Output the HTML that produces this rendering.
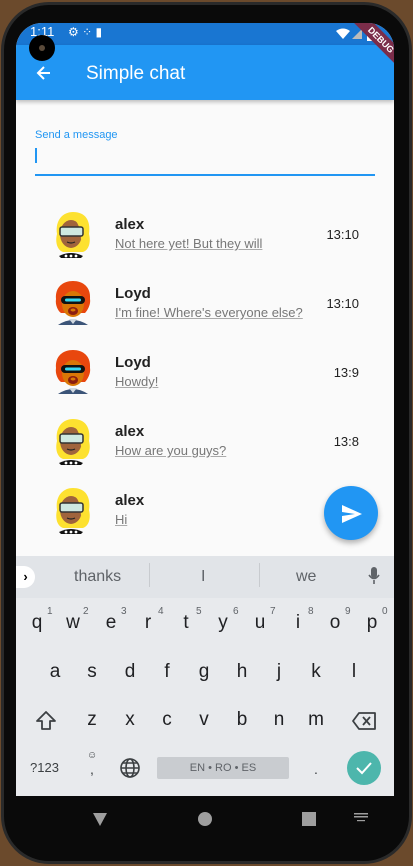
<!DOCTYPE html>
<html><head><meta charset="utf-8"><style>
*{margin:0;padding:0;box-sizing:border-box}
body{width:413px;height:866px;background:#6b4a2c;position:relative;overflow:hidden;font-family:"Liberation Sans",Roboto,sans-serif}
.abs{position:absolute}
#phone{left:1px;top:2px;width:411px;height:862px;background:#0a0a0a;border-radius:48px;border:3px solid #2a2a2a}
#screen{left:16px;top:23px;width:378px;height:773px;background:#fafafa;border-radius:26px 26px 0 0;overflow:hidden}
.name{position:absolute;left:99px;font-weight:bold;font-size:15px;color:#222}
.msg{position:absolute;left:99px;font-size:13px;color:#777;text-decoration:underline;text-decoration-color:#aaa}
.time{position:absolute;right:35px;font-size:13px;color:#222}
.k{position:absolute;font-size:19px;color:#202124;width:30px;text-align:center;transform:translateX(-15px)}
.n{position:absolute;font-size:10px;color:#5f6368}
</style></head><body>
<svg width="0" height="0" style="position:absolute">
<defs>
<g id="alex">
<path d="M4 24 C2 10 10 2 20 2 C32 2 38 10 36 24 C38 32 36 40 30 42 L10 42 C4 40 2 32 4 24Z" fill="#fde130"/>
<ellipse cx="18" cy="24" rx="11" ry="14" fill="#a0643c"/>
<path d="M22 10 C28 12 32 18 30 26 L28 30 C28 22 26 14 22 10Z" fill="#fde130"/>
<rect x="7" y="17" width="23" height="9" rx="2" fill="#cfe8e0" stroke="#333" stroke-width="1.5"/>
<path d="M14 32 Q18 34 22 32" stroke="#222" fill="none" stroke-width="1.2"/>
<path d="M6 46 Q18 40 30 46 L28 48 L8 48Z" fill="#111"/>
<circle cx="13" cy="46" r="1.4" fill="#fff"/><circle cx="18" cy="46" r="1.4" fill="#fff"/><circle cx="23" cy="46" r="1.4" fill="#fff"/>
</g>
<g id="loyd">
<path d="M3 20 C2 8 10 2 20 2 C30 2 38 8 37 20 C38 26 34 32 32 34 L8 34 C5 32 2 26 3 20Z" fill="#e8470e"/>
<ellipse cx="20" cy="25" rx="11" ry="13" fill="#d97706"/>
<rect x="8" y="17" width="24" height="8" rx="4" fill="#111"/>
<rect x="12" y="19.5" width="16" height="3" rx="1.5" fill="#38d8f0"/>
<ellipse cx="20" cy="32" rx="5" ry="4" fill="#8b1e10"/>
<ellipse cx="20" cy="31" rx="2.5" ry="1.5" fill="#d97706"/>
<path d="M5 46 Q20 36 35 46Z" fill="#3b5478"/>
<path d="M16 40 L20 45 L24 40" fill="#d0d8e0"/>
</g>
</defs></svg>
<div id="phone" class="abs"></div>
<div id="screen" class="abs">
 <div class="abs" style="left:0;top:0;width:378px;height:22px;background:#1976d2"></div>
 <div class="abs" style="left:0;top:22px;width:378px;height:55px;background:#2196f3;box-shadow:0 2px 4px rgba(0,0,0,.25)"></div>
 <div class="abs" style="left:14px;top:1px;color:#fff;font-size:13px">1:11</div>
 <div class="abs" style="left:52px;top:2px;color:#fff;font-size:12px">⚙ ⁘ ▮</div>
 <svg class="abs" style="left:318px;top:5px" width="40" height="14"><path d="M2 3 Q9 -2 16 3 L9 11Z" fill="#fff"/><path d="M18 11 L28 1 L28 11Z" fill="#bbb"/><rect x="33" y="1" width="6" height="12" fill="#fff"/></svg>
 <svg class="abs" style="left:18px;top:40px" width="20" height="20"><path d="M16 10H4M10 4L4 10L10 16" stroke="#fff" stroke-width="2" fill="none"/></svg>
 <div class="abs" style="left:70px;top:40px;color:#fff;font-size:19px">Simple chat</div>
 <div class="abs" style="left:320px;top:10px;width:90px;height:14px;background:#7b2d4a;transform:rotate(45deg);color:#fff;font-size:9px;font-weight:bold;text-align:center;line-height:14px">DEBUG</div>
 <div class="abs" style="left:19px;top:106px;color:#2196f3;font-size:11px">Send a message</div>
 <div class="abs" style="left:19px;top:125px;width:2px;height:15px;background:#2196f3"></div>
 <div class="abs" style="left:19px;top:151px;width:340px;height:2px;background:#2196f3"></div>

 <svg class="abs" style="left:37px;top:187px" width="42" height="50"><use href="#alex"/></svg>
 <div class="name" style="top:193px">alex</div><div class="msg" style="top:213px">Not here yet! But they will</div><div class="time" style="top:204px">13:10</div>
 <svg class="abs" style="left:37px;top:256px" width="42" height="50"><use href="#loyd"/></svg>
 <div class="name" style="top:262px">Loyd</div><div class="msg" style="top:282px">I'm fine! Where's everyone else?</div><div class="time" style="top:273px">13:10</div>
 <svg class="abs" style="left:37px;top:325px" width="42" height="50"><use href="#loyd"/></svg>
 <div class="name" style="top:331px">Loyd</div><div class="msg" style="top:351px">Howdy!</div><div class="time" style="top:342px">13:9</div>
 <svg class="abs" style="left:37px;top:394px" width="42" height="50"><use href="#alex"/></svg>
 <div class="name" style="top:400px">alex</div><div class="msg" style="top:420px">How are you guys?</div><div class="time" style="top:411px">13:8</div>
 <svg class="abs" style="left:37px;top:463px" width="42" height="50"><use href="#alex"/></svg>
 <div class="name" style="top:469px">alex</div><div class="msg" style="top:489px">Hi</div>
 <div class="abs" style="left:308px;top:463px;width:54px;height:54px;border-radius:50%;background:#2196f3;box-shadow:0 3px 6px rgba(0,0,0,.3)"></div>
 <svg class="abs" style="left:325px;top:481px" width="22" height="20"><path d="M1 1L21 10L1 19L1 12L14 10L1 8Z" fill="#fff"/></svg>

 <div class="abs" style="left:0;top:533px;width:378px;height:240px;background:#e8eaed"></div>
 <div class="abs" style="left:0;top:533px;width:378px;height:42px;background:#e1e4e8"></div>
 <div class="abs" style="left:0;top:543px;width:19px;height:22px;background:#fff;border-radius:0 11px 11px 0;font-size:13px;text-align:center;line-height:22px;font-weight:bold">›</div>
 <div class="abs" style="left:58px;top:545px;font-size:16px;color:#5f6368">thanks</div>
 <div class="abs" style="left:133px;top:540px;width:1px;height:24px;background:#c8cbcf"></div>
 <div class="abs" style="left:185px;top:545px;font-size:16px;color:#5f6368">I</div>
 <div class="abs" style="left:243px;top:540px;width:1px;height:24px;background:#c8cbcf"></div>
 <div class="abs" style="left:280px;top:545px;font-size:16px;color:#5f6368">we</div>
 <svg class="abs" style="left:351px;top:543px" width="14" height="20"><rect x="4" y="1" width="6" height="11" rx="3" fill="#5f6368"/><path d="M2 9Q7 16 12 9M7 14V18" stroke="#5f6368" stroke-width="1.6" fill="none"/></svg>

 <div class="k" style="left:21px;top:589px">q</div><div class="n" style="left:31px;top:583px">1</div>
 <div class="k" style="left:57px;top:589px">w</div><div class="n" style="left:67px;top:583px">2</div>
 <div class="k" style="left:95px;top:589px">e</div><div class="n" style="left:105px;top:583px">3</div>
 <div class="k" style="left:132px;top:589px">r</div><div class="n" style="left:142px;top:583px">4</div>
 <div class="k" style="left:170px;top:589px">t</div><div class="n" style="left:180px;top:583px">5</div>
 <div class="k" style="left:207px;top:589px">y</div><div class="n" style="left:217px;top:583px">6</div>
 <div class="k" style="left:244px;top:589px">u</div><div class="n" style="left:254px;top:583px">7</div>
 <div class="k" style="left:282px;top:589px">i</div><div class="n" style="left:292px;top:583px">8</div>
 <div class="k" style="left:319px;top:589px">o</div><div class="n" style="left:329px;top:583px">9</div>
 <div class="k" style="left:356px;top:589px">p</div><div class="n" style="left:366px;top:583px">0</div>

 <div class="k" style="left:39px;top:638px">a</div><div class="k" style="left:76px;top:638px">s</div><div class="k" style="left:114px;top:638px">d</div><div class="k" style="left:151px;top:638px">f</div><div class="k" style="left:188px;top:638px">g</div><div class="k" style="left:226px;top:638px">h</div><div class="k" style="left:263px;top:638px">j</div><div class="k" style="left:300px;top:638px">k</div><div class="k" style="left:338px;top:638px">l</div>

 <svg class="abs" style="left:18px;top:686px" width="24" height="24"><path d="M12 3L3 12H8V20H16V12H21Z" stroke="#3c4043" stroke-width="1.8" fill="none" stroke-linejoin="round"/></svg>
 <div class="k" style="left:76px;top:686px">z</div><div class="k" style="left:114px;top:686px">x</div><div class="k" style="left:151px;top:686px">c</div><div class="k" style="left:188px;top:686px">v</div><div class="k" style="left:226px;top:686px">b</div><div class="k" style="left:263px;top:686px">n</div><div class="k" style="left:300px;top:686px">m</div>
 <svg class="abs" style="left:335px;top:687px" width="26" height="22"><path d="M8 3H24V19H8L2 11Z" stroke="#3c4043" stroke-width="1.8" fill="none" stroke-linejoin="round"/><path d="M12 7L19 15M19 7L12 15" stroke="#3c4043" stroke-width="1.8"/></svg>

 <div class="abs" style="left:14px;top:737px;font-size:13px;color:#3c4043">?123</div>
 <div class="abs" style="left:71px;top:727px;font-size:10px;color:#3c4043">☺</div>
 <div class="abs" style="left:74px;top:738px;font-size:14px;color:#3c4043">,</div>
 <svg class="abs" style="left:103px;top:734px" width="22" height="22"><g stroke="#3c4043" stroke-width="1.6" fill="none"><circle cx="11" cy="11" r="9"/><ellipse cx="11" cy="11" rx="4" ry="9"/><path d="M2 11H20M4 6H18M4 16H18"/></g></svg>
 <div class="abs" style="left:141px;top:734px;width:132px;height:22px;background:#c9ccd0;border-radius:2px;font-size:11px;color:#5f6368;text-align:center;line-height:22px">EN • RO • ES</div>
 <div class="abs" style="left:298px;top:738px;font-size:14px;color:#3c4043">.</div>
 <div class="abs" style="left:331px;top:728px;width:34px;height:34px;border-radius:50%;background:#4db6ac"></div>
 <svg class="abs" style="left:338px;top:735px" width="20" height="20"><path d="M3 10L8 15L17 5" stroke="#fff" stroke-width="2" fill="none"/></svg>
</div>
<div class="abs" style="left:29px;top:35px;width:26px;height:26px;border-radius:50%;background:#000"></div>
<div class="abs" style="left:39px;top:45px;width:6px;height:6px;border-radius:50%;background:#5a4a3a"></div>
<svg class="abs" style="left:0;top:796px" width="413" height="50">
<path d="M93 17H107L100 30Z" fill="#9e9e9e"/><circle cx="205" cy="23" r="7" fill="#9e9e9e"/><rect x="302" y="16" width="14" height="14" fill="#9e9e9e"/>
<g fill="#9e9e9e"><rect x="354" y="17" width="14" height="1.5"/><rect x="354" y="20" width="14" height="1.5"/><rect x="357" y="24" width="8" height="1.2"/></g>
</svg>
</body></html>
